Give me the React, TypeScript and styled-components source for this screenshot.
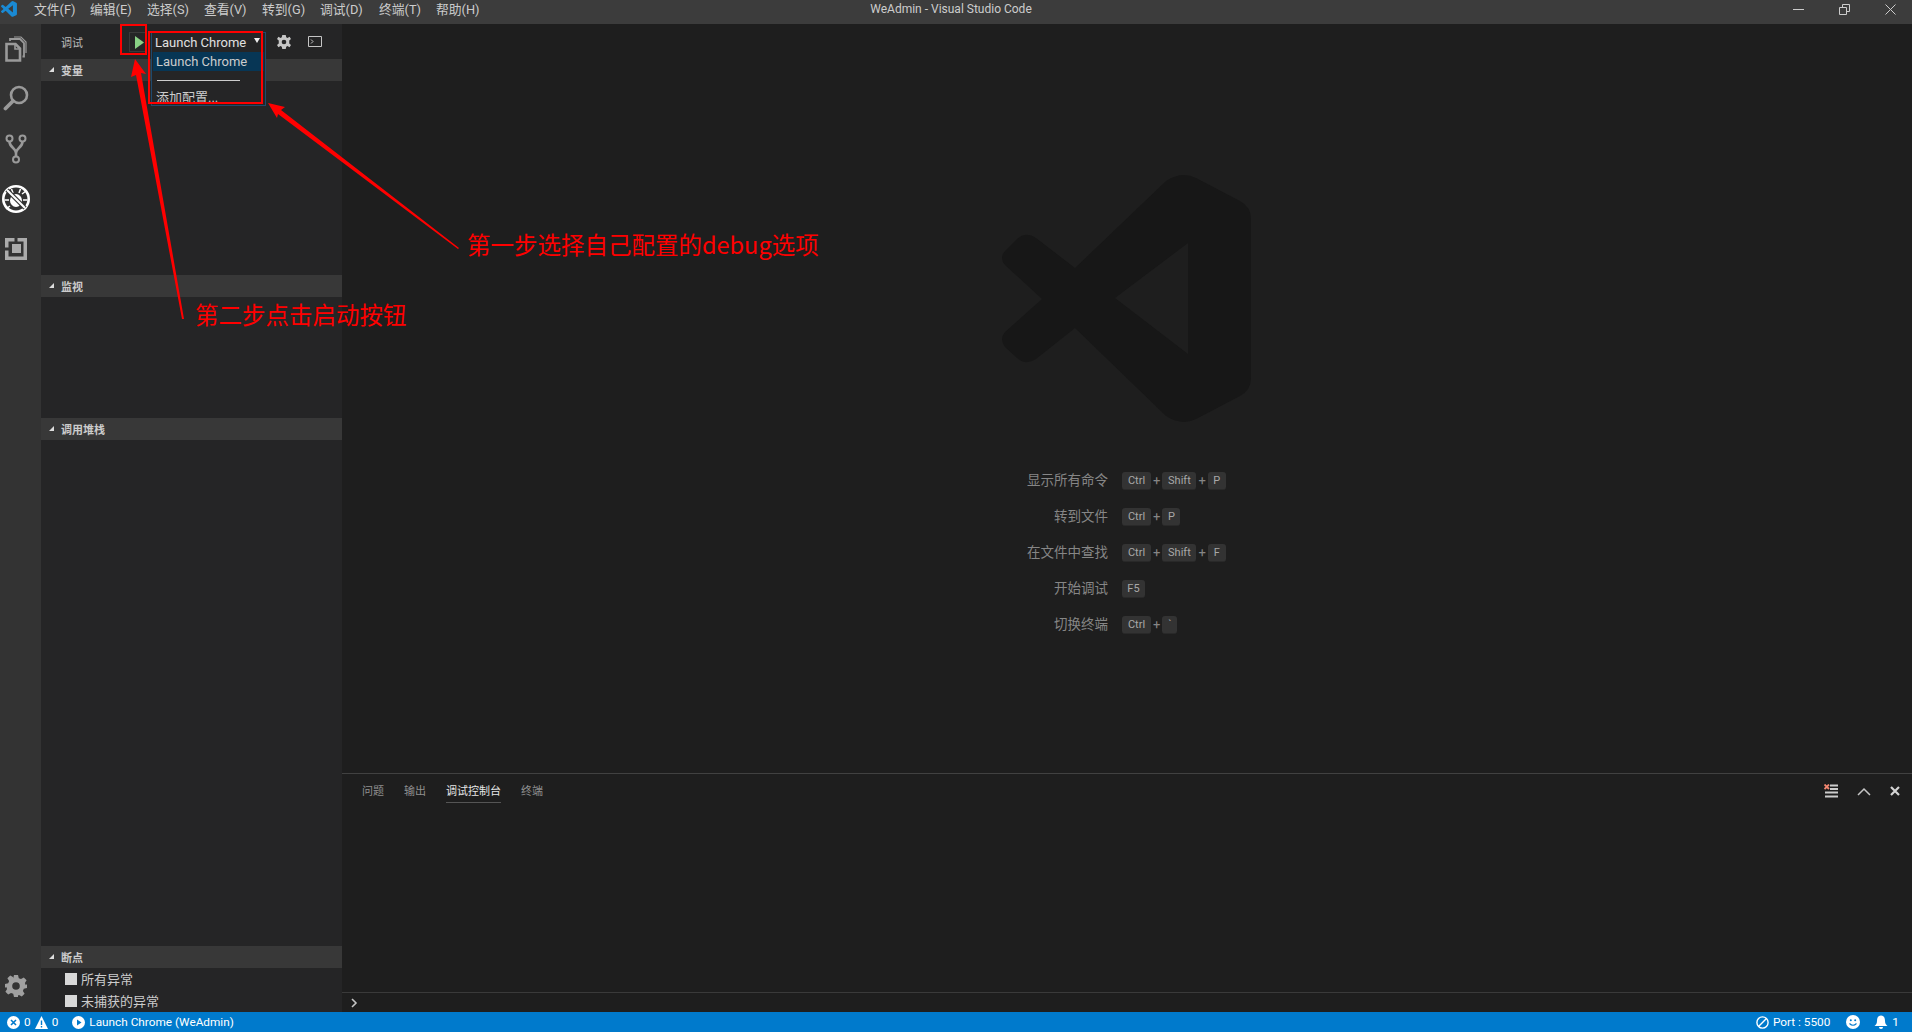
import styled, { createGlobalStyle } from "styled-components";

const GlobalStyle = createGlobalStyle`
  html, body, #root {
    margin: 0;
    padding: 0;
    width: 100%;
    height: 100%;
    overflow: hidden;
  }
  body {
    background: #1e1e1e;
  }
`;

const SANS = `Roboto, "Noto Sans CJK SC", sans-serif`;
const LOGO_PATH =
  "M164 6 Q180 -4 194 3 L238 26 Q249 32 249 44 L249 203 Q249 215 238 221 L194 244 Q180 251 164 241 L73 153 L34 184 Q24 191 15 183 L3 172 Q-3 164 3 157 L40 124 L3 90 Q-3 83 3 76 L15 64 Q24 56 34 63 L73 93 Z M186 68 L113 123 L186 179 Z";

const Window = styled.div`
  position: relative;
  width: 1912px;
  height: 1032px;
  display: flex;
  flex-direction: column;
  font-family: ${SANS};
  overflow: hidden;
`;

/* title bar */
const TitleBar = styled.div`
  height: 24px;
  flex: none;
  box-sizing: border-box;
  padding-bottom: 6px;
  display: flex;
  align-items: center;
  background: #3c3c3c;
  color: #ccc;
  font-size: 13px;
`;

const AppLogo = styled.div`
  width: 26px;
  flex: none;
  padding-left: 1px;
  box-sizing: border-box;
  display: flex;
`;

const Menu = styled.div`
  display: flex;
  flex: none;
  width: 471px;
  padding: 0 0 2px 8px;
  box-sizing: border-box;
  font-size: 12.8px;
`;

const MenuItem = styled.span<{ $w: number }>`
  width: ${(p) => p.$w}px;
  flex: none;
  white-space: nowrap;
`;

const WindowTitle = styled.div`
  flex: 1;
  text-align: center;
  font-size: 12px;
  padding-right: 388px;
`;

const WindowButtons = styled.div`
  display: flex;
  flex: none;
  align-items: center;
  gap: 35px;
  padding-right: 16px;
  color: #ccc;
`;

/* body */
const Body = styled.div`
  flex: 1;
  min-height: 0;
  display: flex;
`;

const ActivityBar = styled.div`
  width: 41px;
  flex: none;
  background: #333;
  display: flex;
  flex-direction: column;
  align-items: center;
  padding: 12px 9px 0 0;
  box-sizing: border-box;
`;

const ActivityIcon = styled.div<{ $h: number }>`
  height: ${(p) => p.$h}px;
  flex: none;
  display: flex;
  align-items: flex-start;
  justify-content: center;
  color: #9a9a9a;
`;

const Grow = styled.div`
  flex: 1;
`;

const Sidebar = styled.div`
  width: 301px;
  flex: none;
  background: #252526;
  display: flex;
  flex-direction: column;
`;

const DebugBar = styled.div`
  height: 35px;
  flex: none;
  display: flex;
  align-items: center;
  padding-left: 20px;
  color: #bbb;
  font-size: 11px;
`;

const DebugLabel = styled.span`
  width: 68px;
  flex: none;
`;

const StartButton = styled.div`
  width: 18px;
  height: 20px;
  flex: none;
  border: 1px solid #3a3a3a;
  box-sizing: border-box;
  display: flex;
  align-items: center;
  justify-content: flex-end;
  padding-right: 2px;
  margin-top: 1px;
`;

const ConfigSelect = styled.div`
  width: 115px;
  height: 20px;
  flex: none;
  margin-left: 4px;
  margin-top: 1px;
  box-sizing: border-box;
  border: 1px solid #1f4a6e;
  color: #e0e0e0;
  font-size: 13px;
  white-space: nowrap;
  display: flex;
  align-items: center;
  padding-left: 3px;
`;

const SelectCaret = styled.span`
  width: 0;
  height: 0;
  position: absolute;
  left: 254px;
  top: 38px;
  border-left: 3px solid transparent;
  border-right: 3px solid transparent;
  border-top: 5px solid #eee;
`;

const BarIcon = styled.span<{ $left: number }>`
  margin-left: ${(p) => p.$left}px;
  display: flex;
  color: #c5c5c5;
`;

const Dropdown = styled.div`
  position: absolute;
  left: 151px;
  top: 51px;
  width: 115px;
  height: 55px;
  box-sizing: border-box;
  border: 1px solid #1f4a6e;
  border-top: none;
  background: #252526;
  color: #ccc;
  font-size: 13px;
  padding: 1px 1px 0;
  overflow: hidden;
`;

const DropdownRow = styled.div<{ $active?: boolean }>`
  height: 19px;
  line-height: 20px;
  padding-left: 3px;
  white-space: nowrap;
  background: ${(p) => (p.$active ? "#073655" : "transparent")};
`;

const DropdownRule = styled.div`
  width: 83px;
  height: 1px;
  margin: 9px 0 7px 4px;
  background: #ccc;
`;

const Section = styled.div<{ $grow: number }>`
  height: ${(p) => p.$grow}px;
  flex: none;
`;

const SectionHeader = styled.div`
  height: 22px;
  box-sizing: border-box;
  display: flex;
  align-items: center;
  background: #383838;
  color: #ccc;
  font-size: 11px;
  font-weight: 700;
  padding: 0 0 1px 8px;
  gap: 7px;
`;

const Twistie = styled.span`
  width: 0;
  height: 0;
  border-left: 5px solid transparent;
  border-bottom: 5px solid #ddd;
`;

const Breakpoint = styled.div`
  height: 22px;
  box-sizing: border-box;
  display: flex;
  align-items: center;
  padding: 0 0 2px 24px;
  gap: 4px;
  color: #ccc;
  font-size: 13px;
`;

const CheckBox = styled.span`
  width: 12px;
  height: 12px;
  margin-top: 2px;
  background: #d8d8d8;
  flex: none;
`;

/* editor and panel */
const Main = styled.div`
  flex: 1;
  min-width: 0;
  display: flex;
  flex-direction: column;
  background: #1e1e1e;
`;

const Editor = styled.div`
  flex: 1;
  min-height: 0;
  display: flex;
  flex-direction: column;
  align-items: center;
  padding-top: 151px;
  box-sizing: border-box;
`;

const Shortcuts = styled.div`
  margin-top: 44px;
  margin-right: 60px;
  display: flex;
  flex-direction: column;
  gap: 14px;
`;

const ShortcutRow = styled.div`
  width: 262px;
  height: 22px;
  display: flex;
  align-items: center;
  gap: 14px;
  color: #868686;
  font-size: 13.5px;
`;

const ShortcutLabel = styled.span`
  width: 142px;
  flex: none;
  padding-bottom: 2px;
  text-align: right;
`;

const Keys = styled.span`
  display: flex;
  align-items: center;
  gap: 2px;
  font-size: 13px;
`;

const Key = styled.span<{ $w: number }>`
  width: ${(p) => p.$w}px;
  height: 18px;
  margin-top: 1px;
  box-sizing: border-box;
  display: flex;
  align-items: center;
  justify-content: center;
  background: #333;
  border-bottom: 1px solid #292929;
  border-radius: 3px;
  color: #a8a8a8;
  font-size: 11px;
`;

const Panel = styled.div`
  height: 239px;
  flex: none;
  display: flex;
  flex-direction: column;
  border-top: 1px solid #414141;
  box-sizing: border-box;
`;

const PanelHead = styled.div`
  height: 34px;
  flex: none;
  display: flex;
  align-items: center;
  padding: 0 12px 0 20px;
  gap: 20px;
`;

const PanelTab = styled.span<{ $active?: boolean }>`
  height: 23px;
  line-height: 23px;
  margin-top: 1px;
  box-sizing: border-box;
  font-size: 11px;
  color: ${(p) => (p.$active ? "#e7e7e7" : "#8f8f8f")};
  border-bottom: 1px solid ${(p) => (p.$active ? "#555" : "transparent")};
`;

const PanelActions = styled.div`
  margin-left: auto;
  display: flex;
  align-items: center;
  gap: 19px;
`;

const PanelSpace = styled.div`
  flex: 1;
`;

const ConsoleInput = styled.div`
  height: 19px;
  flex: none;
  border-top: 1px solid #3a3a3a;
  display: flex;
  align-items: center;
  padding-left: 9px;
`;

/* status bar */
const StatusBar = styled.div`
  height: 20px;
  flex: none;
  background: #007acc;
  color: #fff;
  font-size: 11.8px;
  display: flex;
  align-items: center;
  padding: 0 13px 0 7px;
`;

const StatusItem = styled.span<{ $left?: number }>`
  display: flex;
  align-items: center;
  gap: 4px;
  margin-left: ${(p) => p.$left ?? 0}px;
  white-space: nowrap;
`;

/* red annotations drawn over the screenshot */
const RedBox = styled.div<{ $x: number; $y: number; $w: number; $h: number }>`
  position: absolute;
  left: ${(p) => p.$x}px;
  top: ${(p) => p.$y}px;
  width: ${(p) => p.$w}px;
  height: ${(p) => p.$h}px;
  box-sizing: border-box;
  border: 2px solid #f00;
`;

const RedNote = styled.div<{ $x: number; $y: number }>`
  position: absolute;
  left: ${(p) => p.$x}px;
  top: ${(p) => p.$y}px;
  color: #f00;
  font-size: 23.5px;
  line-height: 32px;
  white-space: nowrap;
  font-family: "Noto Sans CJK SC", sans-serif;
`;

const ArrowLayer = styled.svg`
  position: absolute;
  left: 0;
  top: 0;
  pointer-events: none;
`;

const shortcuts: { label: string; keys: [string, number][] }[] = [
  { label: "显示所有命令", keys: [["Ctrl", 29], ["Shift", 34], ["P", 18]] },
  { label: "转到文件", keys: [["Ctrl", 29], ["P", 18]] },
  { label: "在文件中查找", keys: [["Ctrl", 29], ["Shift", 34], ["F", 18]] },
  { label: "开始调试", keys: [["F5", 23]] },
  { label: "切换终端", keys: [["Ctrl", 29], ["`", 15]] },
];

const menus: [string, number][] = [
  ["文件(F)", 56],
  ["编辑(E)", 57],
  ["选择(S)", 57],
  ["查看(V)", 58],
  ["转到(G)", 58],
  ["调试(D)", 59],
  ["终端(T)", 57],
  ["帮助(H)", 44],
];

const App = () => {
  return (
    <Window>
      <GlobalStyle />
      <TitleBar>
        <AppLogo>
          <svg width="16" height="16" viewBox="0 0 250 250">
            <path fill="#1a8ad4" fillRule="evenodd" d={LOGO_PATH} />
          </svg>
        </AppLogo>
        <Menu>
          {menus.map(([m, w]) => (
            <MenuItem key={m} $w={w}>
              {m}
            </MenuItem>
          ))}
        </Menu>
        <WindowTitle>WeAdmin - Visual Studio Code</WindowTitle>
        <WindowButtons>
          <svg width="11" height="11" viewBox="0 0 11 11">
            <path d="M0 5.5H11" stroke="currentColor" fill="none" />
          </svg>
          <svg width="11" height="11" viewBox="0 0 11 11">
            <path d="M0.5 3.5H7.5V10.5H0.5Z M3.5 3V0.5H10.5V7.5H8" stroke="currentColor" fill="none" />
          </svg>
          <svg width="11" height="11" viewBox="0 0 11 11">
            <path d="M0.5 0.5L10.5 10.5M10.5 0.5L0.5 10.5" stroke="currentColor" fill="none" />
          </svg>
        </WindowButtons>
      </TitleBar>

      <Body>
        <ActivityBar>
          <ActivityIcon $h={49}>
            <svg width="22" height="26" viewBox="0 0 22 26" fill="none" stroke="currentColor">
              <path d="M1.5 8H10.5L15 12.5V24.5H1.5Z" strokeWidth="2.6" />
              <path d="M10 8V13H15" strokeWidth="1.6" />
              <path d="M5 5V3H15L19 7V20.5H17.5" strokeWidth="1.8" />
              <path d="M9 1H16L21 6V17" strokeWidth="1.2" />
            </svg>
          </ActivityIcon>
          <ActivityIcon $h={49}>
            <svg width="26" height="26" viewBox="0 0 26 26" fill="none" stroke="currentColor">
              <circle cx="16" cy="10" r="8" strokeWidth="2.6" />
              <path d="M10 16L2.5 23.5" strokeWidth="3.8" strokeLinecap="round" />
            </svg>
          </ActivityIcon>
          <ActivityIcon $h={50}>
            <svg width="22" height="30" viewBox="0 0 22 30" fill="none" stroke="currentColor" strokeWidth="2">
              <circle cx="4.5" cy="4.5" r="3" />
              <circle cx="17.5" cy="4.5" r="3" />
              <circle cx="11" cy="25.5" r="3" />
              <path d="M4.5 7.5C4.5 14 11 14 11 19V22.5M17.5 7.5C17.5 14 11 14 11 19" strokeWidth="2.6" />
            </svg>
          </ActivityIcon>
          <ActivityIcon $h={54}>
            <svg width="30" height="30" viewBox="0 0 30 30">
              <circle cx="15" cy="15" r="12.7" fill="none" stroke="#fff" strokeWidth="2.6" />
              <ellipse cx="15" cy="16.5" rx="6" ry="6.5" fill="#fff" />
              <path
                d="M9 10L5 7M21 10L25 7M8 16H3.5M22 16H26.5M9 22L5 25M21 22L25 25M12 9L10.5 5M18 9L19.5 5"
                stroke="#fff"
                strokeWidth="1.5"
              />
              <path d="M6 6L24 24" stroke="#333" strokeWidth="4.4" />
              <path d="M6 6L24 24" stroke="#fff" strokeWidth="2.2" />
            </svg>
          </ActivityIcon>
          <ActivityIcon $h={40}>
            <svg width="22" height="22" viewBox="0 0 22 22" fill="#ababab">
              <path
                fillRule="evenodd"
                d="M0 0H9.5V3.5H3.5V9.5H0Z M12.5 0H22V22H0V12.5H3.5V18.5H18.5V3.5H12.5Z M7 6H16V15H7Z"
              />
            </svg>
          </ActivityIcon>
          <Grow />
          <ActivityIcon $h={38}>
            <svg width="24" height="24" viewBox="0 0 24 24" fill="#a0a0a0">
              <path
                fillRule="evenodd"
                d="M10 1H14L14.8 4.2L17 5.1L19.8 3.4L22.6 6.2L20.9 9L21.8 11.2L23 10V14L19.8 14.8L18.9 17L20.6 19.8L17.8 22.6L15 20.9L14 21.4L14 23H10L9.2 19.8L7 18.9L4.2 20.6L1.4 17.8L3.1 15L2.2 12.8L1 14V10L4.2 9.2L5.1 7L3.4 4.2L6.2 1.4L9 3.1L9.2 4.2Z M12 8.2A3.8 3.8 0 1 0 12 15.8A3.8 3.8 0 1 0 12 8.2Z"
              />
            </svg>
          </ActivityIcon>
        </ActivityBar>

        <Sidebar>
          <DebugBar>
            <DebugLabel>调试</DebugLabel>
            <StartButton>
              <svg width="9" height="13" viewBox="0 0 9 13">
                <path d="M0 0L9 6.5L0 13Z" fill="#89d185" />
              </svg>
            </StartButton>
            <ConfigSelect>
              Launch Chrome
              <SelectCaret />
            </ConfigSelect>
            <BarIcon $left={11}>
              <svg width="14" height="14" viewBox="0 0 24 24" fill="currentColor">
                <path
                  fillRule="evenodd"
                  d="M9 0H15L15.8 4L18 5L21.5 3L24 7L21 9.5V14.5L24 17L21.5 21L18 19L15.8 20L15 24H9L8.2 20L6 19L2.5 21L0 17L3 14.5V9.5L0 7L2.5 3L6 5L8.2 4Z M12 8A4 4 0 1 0 12 16A4 4 0 1 0 12 8Z"
                />
              </svg>
            </BarIcon>
            <BarIcon $left={17}>
              <svg width="14" height="11" viewBox="0 0 14 11" fill="none" stroke="currentColor">
                <path d="M0.5 0.5H13.5V10.5H0.5Z" />
                <path d="M3 3.5L5 5.5L3 7.5" />
              </svg>
            </BarIcon>
          </DebugBar>
          <Section $grow={216}>
            <SectionHeader>
              <Twistie />
              变量
            </SectionHeader>
          </Section>
          <Section $grow={143}>
            <SectionHeader>
              <Twistie />
              监视
            </SectionHeader>
          </Section>
          <Section $grow={528}>
            <SectionHeader>
              <Twistie />
              调用堆栈
            </SectionHeader>
          </Section>
          <Section $grow={66}>
            <SectionHeader>
              <Twistie />
              断点
            </SectionHeader>
            <Breakpoint>
              <CheckBox />
              所有异常
            </Breakpoint>
            <Breakpoint>
              <CheckBox />
              未捕获的异常
            </Breakpoint>
          </Section>
        </Sidebar>

        <Main>
          <Editor>
            <svg width="250" height="250" viewBox="0 0 250 250">
              <path fill="#171717" fillRule="evenodd" d={LOGO_PATH} />
            </svg>
            <Shortcuts>
              {shortcuts.map((s) => (
                <ShortcutRow key={s.label}>
                  <ShortcutLabel>{s.label}</ShortcutLabel>
                  <Keys>
                    {s.keys.map(([k, w], i) => (
                      <Keys key={k}>
                        {i > 0 && <span>+</span>}
                        <Key $w={w}>{k}</Key>
                      </Keys>
                    ))}
                  </Keys>
                </ShortcutRow>
              ))}
            </Shortcuts>
          </Editor>
          <Panel>
            <PanelHead>
              <PanelTab>问题</PanelTab>
              <PanelTab>输出</PanelTab>
              <PanelTab $active>调试控制台</PanelTab>
              <PanelTab>终端</PanelTab>
              <PanelActions>
                <svg width="14" height="14" viewBox="0 0 14 14">
                  <path d="M6 1.5H14M6 5H14M1 8.5H14M1 12.5H14" stroke="#ccc" strokeWidth="2" />
                  <path d="M0.5 0.5L5 5M5 0.5L0.5 5" stroke="#f48771" strokeWidth="1.8" />
                </svg>
                <svg width="14" height="9" viewBox="0 0 14 9">
                  <path d="M1 8L7 2L13 8" stroke="#c5c5c5" strokeWidth="1.5" fill="none" />
                </svg>
                <svg width="10" height="10" viewBox="0 0 10 10">
                  <path d="M1 1L9 9M9 1L1 9" stroke="#d4d4d4" strokeWidth="2.2" />
                </svg>
              </PanelActions>
            </PanelHead>
            <PanelSpace />
            <ConsoleInput>
              <svg width="7" height="10" viewBox="0 0 7 10">
                <path d="M1 1L5 5L1 9" stroke="#c5c5c5" strokeWidth="1.6" fill="none" />
              </svg>
            </ConsoleInput>
          </Panel>
        </Main>
      </Body>

      <StatusBar>
        <StatusItem>
          <svg width="13" height="13" viewBox="0 0 13 13">
            <circle cx="6.5" cy="6.5" r="6.5" fill="#fff" />
            <path d="M4 4L9 9M9 4L4 9" stroke="#007acc" strokeWidth="1.6" />
          </svg>
          0
        </StatusItem>
        <StatusItem $left={4}>
          <svg width="13" height="13" viewBox="0 0 13 13">
            <path d="M6.5 0L13 13H0Z" fill="#fff" />
            <path d="M6.5 4.5V9M6.5 10V11.5" stroke="#007acc" strokeWidth="1.4" />
          </svg>
          0
        </StatusItem>
        <StatusItem $left={14}>
          <svg width="13" height="13" viewBox="0 0 13 13">
            <circle cx="6.5" cy="6.5" r="6.5" fill="#fff" />
            <path d="M5 3.5L9.5 6.5L5 9.5Z" fill="#007acc" />
          </svg>
          Launch Chrome (WeAdmin)
        </StatusItem>
        <Grow />
        <StatusItem>
          <svg width="13" height="13" viewBox="0 0 13 13" fill="none" stroke="#fff" strokeWidth="1.4">
            <circle cx="6.5" cy="6.5" r="5.6" />
            <path d="M2.8 10.2L10.2 2.8" />
          </svg>
          Port : 5500
        </StatusItem>
        <StatusItem $left={16}>
          <svg width="14" height="14" viewBox="0 0 14 14">
            <circle cx="7" cy="7" r="7" fill="#fff" />
            <circle cx="4.8" cy="5.3" r="1" fill="#007acc" />
            <circle cx="9.2" cy="5.3" r="1" fill="#007acc" />
            <path d="M3.5 8.5Q7 12 10.5 8.5" stroke="#007acc" strokeWidth="1.1" fill="none" />
          </svg>
        </StatusItem>
        <StatusItem $left={14}>
          <svg width="14" height="14" viewBox="0 0 14 14" fill="#fff">
            <path d="M7 0.5C10 0.5 11 3 11 6C11 9 12.5 10 13.5 11H0.5C1.5 10 3 9 3 6C3 3 4 0.5 7 0.5Z" />
            <path d="M5 12H9A2 2 0 0 1 5 12Z" />
          </svg>
          1
        </StatusItem>
      </StatusBar>

      <Dropdown>
        <DropdownRow $active>Launch Chrome</DropdownRow>
        <DropdownRule />
        <DropdownRow>添加配置...</DropdownRow>
      </Dropdown>

      <RedBox $x={120} $y={24} $w={27} $h={31} />
      <RedBox $x={148} $y={31} $w={115} $h={73} />

      <ArrowLayer width="1912" height="1032">
        <path d="M268 103L285 107L281 110L459 248L458 249L278 114L277 118Z" fill="#f00" />
        <path d="M135 59L146 74L141 73L184 319L182 319L136 75L131 77Z" fill="#f00" />
      </ArrowLayer>

      <RedNote $x={467} $y={228}>第一步选择自己配置的debug选项</RedNote>
      <RedNote $x={195} $y={298}>第二步点击启动按钮</RedNote>
    </Window>
  );
};

export default App;
